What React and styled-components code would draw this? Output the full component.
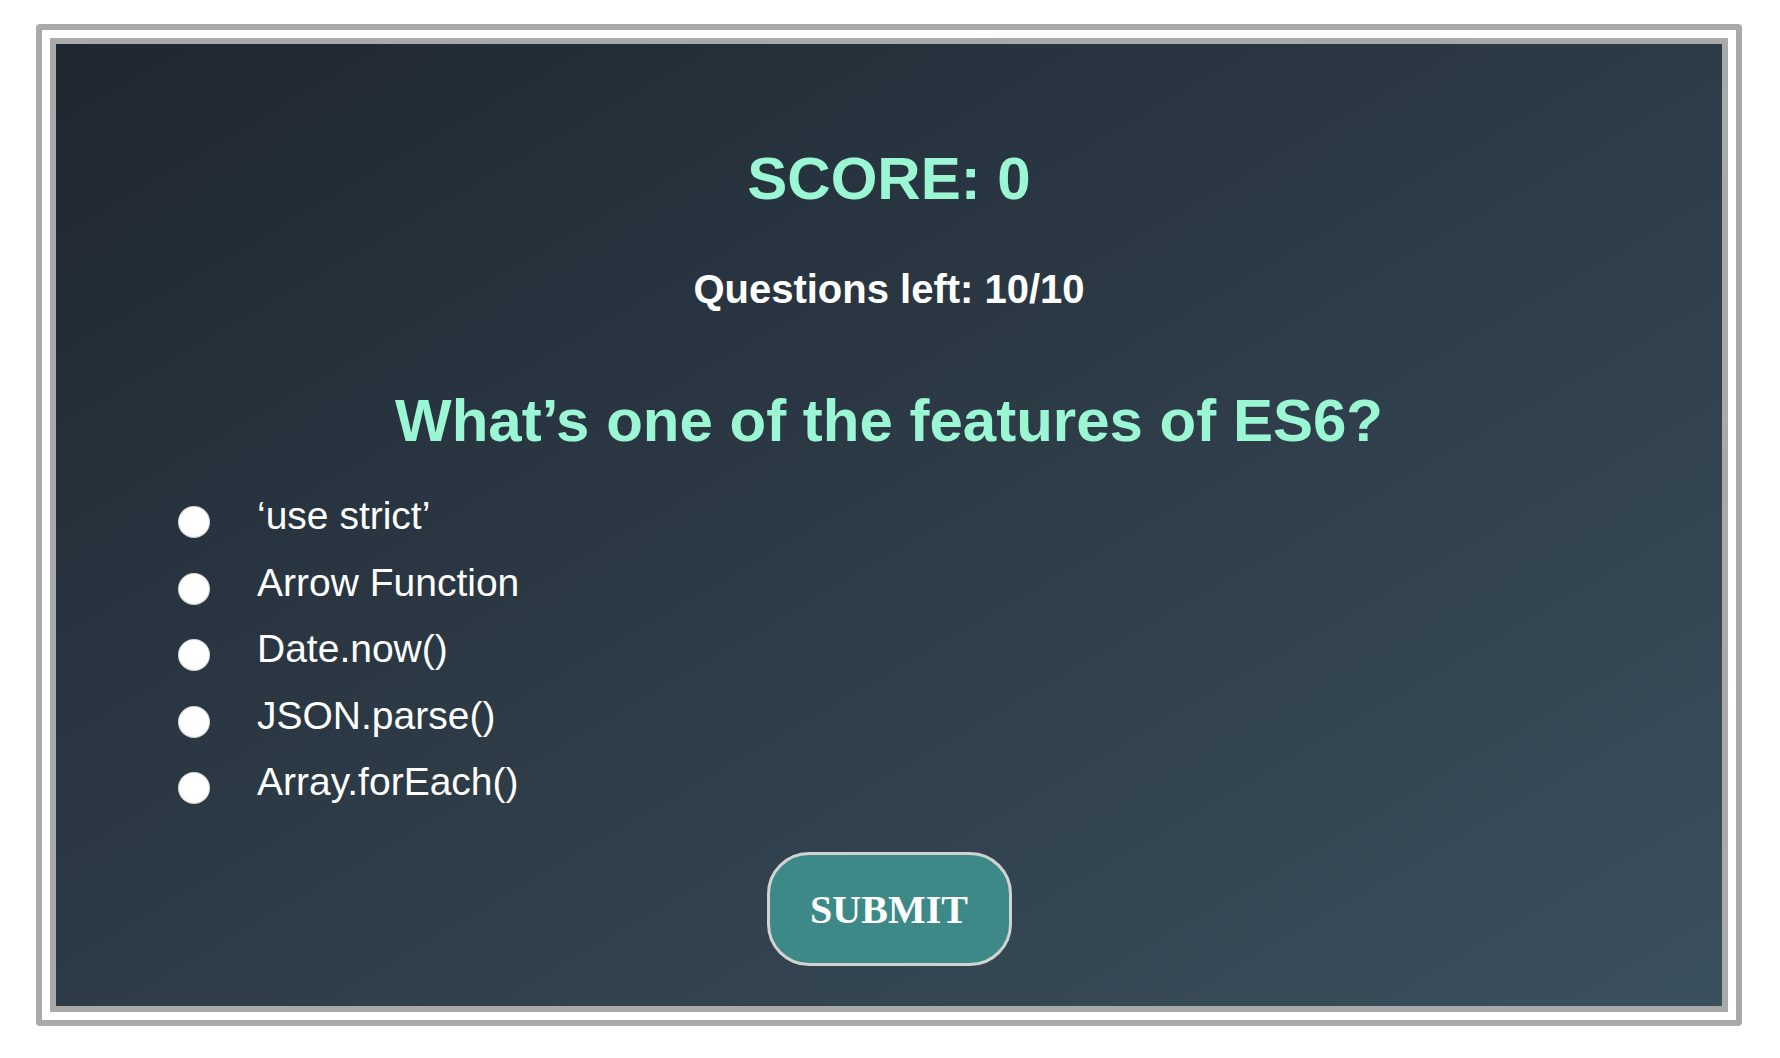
import { useState } from "react";
import styled, { createGlobalStyle } from "styled-components";

const GlobalStyle = createGlobalStyle`
  html, body {
    margin: 0;
    padding: 0;
    background: #ffffff;
  }
  body {
    font-family: "Liberation Sans", Arial, sans-serif;
  }
`;

const Page = styled.div`
  display: flex;
  justify-content: center;
  padding: 24px 38px 32px 36px;
`;

const OuterFrame = styled.div`
  flex: 1;
  border: 6px solid #a9a9a9;
  border-radius: 4px;
  padding: 8px;
  background: #ffffff;
`;

const QuizCard = styled.div`
  display: flex;
  flex-direction: column;
  align-items: center;
  border: 6px solid #a9a9a9;
  padding: 105px 0 40px;
  background: linear-gradient(to bottom right, #1f2731, #3b505d);
`;

const Score = styled.h1`
  margin: 0;
  font-size: 60px;
  line-height: 1;
  font-weight: 700;
  color: #9bf6d4;
`;

const Remaining = styled.h3`
  margin: 60px 0 0;
  font-size: 40px;
  line-height: 1;
  font-weight: 700;
  color: #ffffff;
`;

const Question = styled.h2`
  margin: 82px 0 0;
  font-size: 60px;
  line-height: 1;
  font-weight: 700;
  color: #9bf6d4;
`;

const OptionList = styled.div`
  align-self: stretch;
  display: flex;
  flex-direction: column;
  gap: 24.5px;
  margin-top: 45px;
  padding-left: 122px;
`;

const Option = styled.label`
  display: flex;
  align-items: flex-start;
  gap: 47px;
  font-size: 39px;
  line-height: 1;
  color: #ffffff;
  cursor: pointer;
`;

const Radio = styled.input.attrs({ type: "radio" })`
  appearance: none;
  flex: none;
  width: 32px;
  height: 32px;
  margin: 10px 0 0;
  border-radius: 50%;
  background: radial-gradient(circle at 50% 45%, #ffffff 58%, #e6e6e6 100%);
  box-shadow: inset 0 0 0 1px rgba(0, 0, 0, 0.15);
  cursor: pointer;

  &:checked {
    background: radial-gradient(circle, #1f2731 30%, #ffffff 34%);
  }
`;

const SubmitButton = styled.button`
  margin-top: 48px;
  width: 245px;
  height: 114px;
  border: 3px solid #d2d2d2;
  border-radius: 42px;
  background: #3c8987;
  color: #ffffff;
  font-family: "Liberation Serif", "Times New Roman", serif;
  font-size: 40px;
  font-weight: 700;
  cursor: pointer;
`;

const answers = [
  "\u2018use strict\u2019",
  "Arrow Function",
  "Date.now()",
  "JSON.parse()",
  "Array.forEach()",
];

export default function App() {
  const [picked, setPicked] = useState(null);

  return (
    <>
      <GlobalStyle />
      <Page>
        <OuterFrame>
          <QuizCard>
            <Score>SCORE: 0</Score>
            <Remaining>Questions left: 10/10</Remaining>
            <Question>What’s one of the features of ES6?</Question>
            <OptionList>
              {answers.map((answer) => (
                <Option key={answer}>
                  <Radio
                    name="answer"
                    checked={picked === answer}
                    onChange={() => setPicked(answer)}
                  />
                  {answer}
                </Option>
              ))}
            </OptionList>
            <SubmitButton>SUBMIT</SubmitButton>
          </QuizCard>
        </OuterFrame>
      </Page>
    </>
  );
}
